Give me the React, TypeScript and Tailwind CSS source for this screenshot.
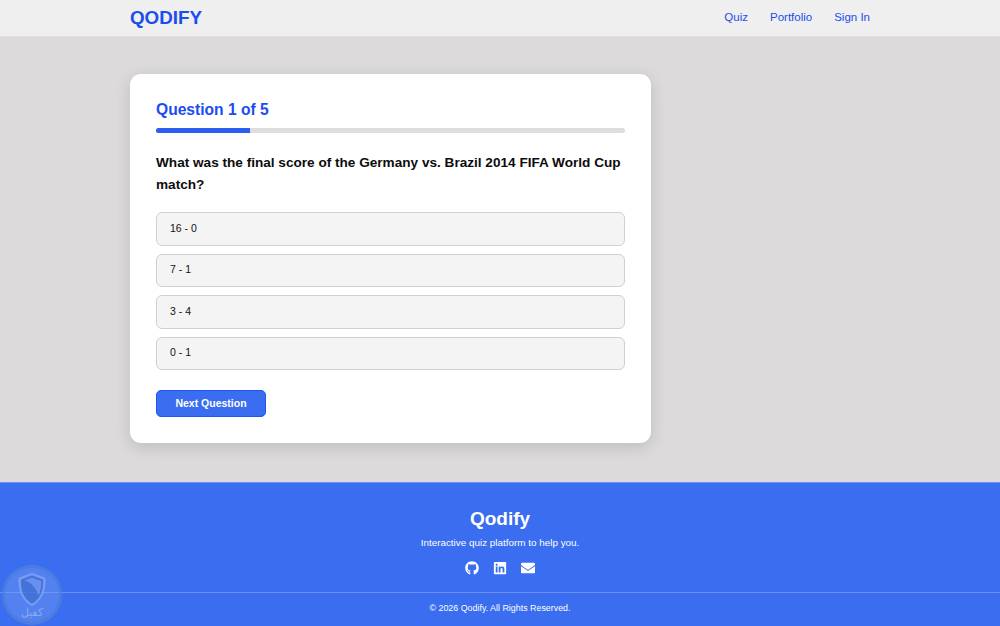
import React from 'react'
import { FaEnvelope, FaGithub, FaLinkedin } from 'react-icons/fa'

const options = ['16 - 0', '7 - 1', '3 - 4', '0 - 1']

const Header: React.FC = () => (
  <header className="h-[37px] border-b border-[#e2e1e1] bg-[#efefef]">
    <div className="mx-auto flex h-9 w-[740px] items-center justify-between">
      <span className="text-[18.8px] font-bold text-[#1a4df0]">QODIFY</span>
      <nav className="flex gap-[22px] text-[11.5px] text-[#1a4df0]">
        <a>Quiz</a>
        <a>Portfolio</a>
        <a>Sign In</a>
      </nav>
    </div>
  </header>
)

const QuizCard: React.FC = () => (
  <div className="h-[369px] w-[521px] rounded-[11px] bg-white px-[26px] pt-[26px] shadow-[0_4px_16px_rgba(0,0,0,0.14)]">
    <h2 className="text-[15.6px] leading-5 font-bold text-[#1a4df0]">Question 1 of 5</h2>
    <div className="mt-[8px] h-[5px] w-full rounded-full bg-[#dfdddd]">
      <div className="h-full w-[20%] rounded-l-full bg-[#2c5ff0]" />
    </div>
    <p className="mt-[19px] text-[13.6px] leading-[22px] font-bold text-[#0c0c0c]">
      What was the final score of the Germany vs. Brazil 2014 FIFA World Cup match?
    </p>
    <div className="mt-[16px] flex flex-col gap-2">
      {options.map((o) => (
        <button
          key={o}
          className="h-[33.5px] rounded-[6px] border border-[#d0d0d0] bg-[#f4f4f4] px-[13px] text-left text-[10.5px] text-[#111]"
        >
          {o}
        </button>
      ))}
    </div>
    <button className="mt-5 h-[27px] w-[110px] rounded-[5px] border border-[#1f55f5] bg-[#3a6df0] text-[10.5px] font-bold text-white">
      Next Question
    </button>
  </div>
)

const Footer: React.FC = () => (
  <footer className="h-[144px] border-t border-[#6d92f3] bg-[#3a6df0] text-center text-white">
    <h3 className="pt-[24px] text-[19px] leading-[24px] font-bold">Qodify</h3>
    <p className="mt-[5px] text-[9.9px] leading-[14px]">Interactive quiz platform to help you.</p>
    <div className="mt-[11px] flex h-[14px] justify-center gap-[14px]">
      <FaGithub size={14} />
      <FaLinkedin size={14} />
      <FaEnvelope size={14} />
    </div>
    <div className="mt-[17px] border-t border-[#6a90f3] pt-2 text-[8.9px] leading-[14px]">
      © 2026 Qodify. All Rights Reserved.
    </div>
  </footer>
)

// faint seal that sits over the footer corner, the rule shows through it
const Watermark: React.FC = () => (
  <div className="absolute top-[565px] left-[2px] flex h-[60px] w-[60px] flex-col items-center rounded-full border-[3px] border-[#4f7ddc]/80 bg-[#7a9ff0]/45 opacity-90">
    <svg viewBox="0 0 40 44" className="mt-[3px] h-[37px] w-[38px] opacity-80">
      <path d="M20 2 L36 8 C37 24 32 35 20 42 C8 35 3 24 4 8 Z" fill="#8aa9ef" />
      <path d="M20 5 L33 10 C34 23 30 33 20 39 C10 33 6 23 7 10 Z" fill="#4270d0" />
      <path d="M20 8 L31 12 C31 17 31 22 28 29 C25 21 20 14 11 11 Z" fill="#7399ee" />
    </svg>
    <span className="mt-[-2px] text-[11px] leading-[12px] text-[#93b3f3]" style={{ fontFamily: '"Noto Sans", sans-serif' }}>كفيل</span>
  </div>
)

export default function App() {
  return (
    <div className="relative flex h-[626px] flex-col overflow-hidden bg-[#dcdadb] font-['Liberation_Sans',sans-serif]">
      <Header />
      <main className="mx-auto w-[740px] flex-1 pt-[37px]">
        <QuizCard />
      </main>
      <Footer />
      <Watermark />
    </div>
  )
}
